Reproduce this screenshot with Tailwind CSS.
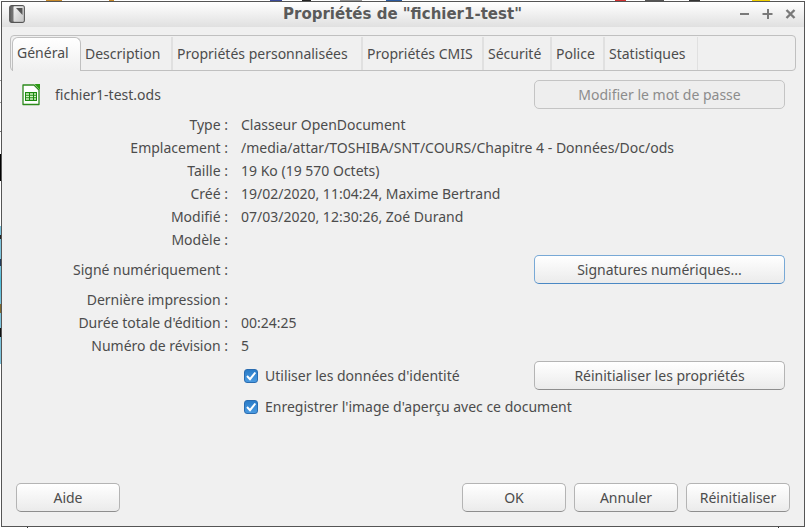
<!DOCTYPE html>
<html lang="fr">
<head>
<meta charset="utf-8">
<meta name="viewport" content="width=device-width, initial-scale=1">
<title>Propriétés de "fichier1-test"</title>
<script src="https://cdn.jsdelivr.net/npm/@tailwindcss/browser@4"></script>
</head>
<body class="min-h-screen flex flex-col font-['Noto_Sans','Open_Sans',sans-serif] text-sm text-[#4c4c4c] bg-white">
<!-- sliver of the window behind, above the dialog -->
<div class="h-px shrink-0 bg-[linear-gradient(to_right,#fff_46px,#c88a2a_46px,#c88a2a_62px,#fff_62px,#fff_109px,#c88a2a_109px,#c88a2a_114px,#fff_114px,#fff_270px,#3a4a9a_270px,#3a4a9a_282px,#fff_282px,#fff_302px,#222_302px,#222_311px,#fff_311px,#fff_340px,#999_340px,#999_362px,#fff_362px,#fff_386px,#2a5aa0_386px,#2a5aa0_402px,#fff_402px,#fff_615px,#d03030_615px,#d03030_626px,#fff_626px,#fff_645px,#555_645px,#555_664px,#fff_664px,#fff_689px,#333_689px,#333_700px,#fff_700px,#fff_752px,#f0d000_752px,#f0d000_770px,#fff_770px)]"></div>
<div class="grow flex">
<!-- sliver of the window behind, left of the dialog -->
<div class="w-px shrink-0 bg-[linear-gradient(to_bottom,#fff_79px,#999_79px,#999_80px,#fff_80px,#fff_101px,#999_101px,#999_102px,#fff_102px,#fff_130px,#777_130px,#777_131px,#fff_131px,#fff_153px,#000_153px,#000_180px,#fff_180px,#fff_225px,#7cc4dd_225px,#7cc4dd_234px,#222_234px,#222_238px,#7cc4dd_238px,#7cc4dd_258px,#223a5a_258px,#223a5a_265px,#7cc4dd_265px,#4cbfdc_280px,#7cc4dd_303px,#806a30_303px,#806a30_312px,#7cc4dd_312px,#7cc4dd_327px,#111_327px,#111_336px,#7cc4dd_336px,#7cc4dd_363px,#fff_363px)]"></div>
<div class="grow flex flex-col border border-[#555] bg-[#f0f0f0]">
  <header class="h-[25px] grid grid-cols-[1fr_auto_1fr] items-center pl-[7px] pr-2 pb-0.5 bg-linear-to-b from-white to-[#e0e0e0]">
    <svg class="w-4 h-[18px]" viewBox="0 0 16 18" aria-hidden="true">
      <defs>
        <linearGradient id="page" x1="0" y1="0" x2="1" y2="1"><stop offset="0" stop-color="#f4f4f4"/><stop offset="1" stop-color="#c4c4c4"/></linearGradient>
        <linearGradient id="spine" x1="0" y1="0" x2="1" y2="0"><stop offset="0" stop-color="#666"/><stop offset="1" stop-color="#a8a8a8"/></linearGradient>
      </defs>
      <rect x=".7" y=".7" width="14.600" height="16.600" rx="2" fill="url(#spine)" stroke="#555" stroke-width="1.2"/>
      <rect x="4.500" y="1.300" width="10.200" height="15.400" rx=".8" fill="url(#page)"/>
      <path d="M7 3h6.500v7z" fill="#555"/>
    </svg>
    <h1 class="font-['DejaVu_Sans',sans-serif] font-bold text-[15px] leading-5 text-[#5a5a5a]">Propriétés de "fichier1-test"</h1>
    <div class="flex justify-end gap-3 text-[#7a7a7a]">
      <button type="button" aria-label="Réduire"><svg class="size-[11px]" viewBox="0 0 11 11"><path d="M1 6h9" stroke="currentColor" stroke-width="2"/></svg></button>
      <button type="button" aria-label="Agrandir"><svg class="size-[11px]" viewBox="0 0 11 11"><path d="M.5 6h10M6 1v10" stroke="currentColor" stroke-width="2"/></svg></button>
      <button type="button" aria-label="Fermer"><svg class="size-[11px]" viewBox="0 0 11 11"><path d="M1.500 2l8 8M9.500 2l-8 8" stroke="currentColor" stroke-width="2.400"/></svg></button>
    </div>
  </header>

  <div role="tablist" class="mx-2 mt-2 h-9 flex border border-[#c0c0c0] rounded-sm pl-px pt-px whitespace-nowrap text-left">
    <button type="button" role="tab" aria-selected="true" class="w-[69px] -mb-px pl-1 pb-1 text-left border border-b-0 border-[#c0c0c0] rounded-t-md bg-linear-to-b from-white to-[#f0f0f0]">Général</button>
    <button type="button" role="tab" aria-selected="false" class="w-[92px] pl-1 text-left border-r-2 border-[#e0e0e0]">Description</button>
    <button type="button" role="tab" aria-selected="false" class="w-[190px] pl-1 text-left border-r-2 border-[#e0e0e0]">Propriétés personnalisées</button>
    <button type="button" role="tab" aria-selected="false" class="w-[121px] pl-1 text-left border-r-2 border-[#e0e0e0]">Propriétés CMIS</button>
    <button type="button" role="tab" aria-selected="false" class="w-[68px] pl-1 text-left border-r-2 border-[#e0e0e0]">Sécurité</button>
    <button type="button" role="tab" aria-selected="false" class="w-[53px] pl-1 text-left border-r-2 border-[#e0e0e0]">Police</button>
    <button type="button" role="tab" aria-selected="false" class="w-[93px] pl-1 text-left border-r border-[#e0e0e0]">Statistiques</button>
  </div>

  <main role="tabpanel" class="flex flex-col gap-1 pt-[9px] pr-[19px]">
    <div class="flex items-center pl-5">
      <svg class="w-[18px] h-[22px]" viewBox="0 0 18 22" aria-hidden="true">
        <path d="M1 1h11l5 5v14.500H1z" fill="#fff" stroke="#2c8a1c" stroke-width="1.300" stroke-linejoin="round"/>
        <path d="M12.500 0H18v6z" fill="#2c9a14"/>
        <rect x="3" y="8" width="12" height="9" fill="#1d8a10"/>
        <path d="M4 10h3M8 10h3M12 10h2M4 12.500h3M8 12.500h3M12 12.500h2M4 15h3M8 15h3M12 15h2" stroke="#d6f5c8" stroke-width="1.300"/>
      </svg>
      <span class="ml-[15px] grow">fichier1-test.ods</span>
      <button type="button" disabled class="w-[251px] h-[29px] rounded-[5px] border border-[#c4c4c4] bg-[#eee] text-[#8c8c8c]">Modifier le mot de passe</button>
    </div>

    <dl class="grid grid-cols-[226px_1fr] gap-x-[13px] leading-[23px]">
      <dt class="text-right">Type :</dt><dd>Classeur OpenDocument</dd>
      <dt class="text-right">Emplacement :</dt><dd>/media/attar/TOSHIBA/SNT/COURS/Chapitre 4 - Données/Doc/ods</dd>
      <dt class="text-right">Taille :</dt><dd>19 Ko (19 570 Octets)</dd>
      <dt class="text-right">Créé :</dt><dd>19/02/2020, 11:04:24, Maxime Bertrand</dd>
      <dt class="text-right">Modifié :</dt><dd>07/03/2020, 12:30:26, Zoé Durand</dd>
      <dt class="text-right">Modèle :</dt><dd></dd>
    </dl>

    <div class="flex items-center justify-between">
      <span class="w-[226px] text-right">Signé numériquement :</span>
      <button type="button" class="w-[251px] h-[29px] rounded-[5px] border border-[#78a9d6] border-b-[#4a88c4] bg-linear-to-b from-white to-[#ebebeb]">Signatures numériques...</button>
    </div>

    <dl class="grid grid-cols-[226px_1fr] gap-x-[13px] leading-[23px]">
      <dt class="text-right">Dernière impression :</dt><dd></dd>
      <dt class="text-right">Durée totale d'édition :</dt><dd>00:24:25</dd>
      <dt class="text-right">Numéro de révision :</dt><dd>5</dd>
    </dl>

    <div class="flex items-center justify-between pl-[242px]">
      <label class="flex items-center gap-[7px]">
        <span class="grid">
          <input type="checkbox" checked class="peer col-start-1 row-start-1 appearance-none size-[14px] rounded-[3px] border border-[#2a6cb0] bg-linear-to-b from-[#2a7cc8] to-[#4a9ae0]">
          <svg class="col-start-1 row-start-1 size-[14px] pointer-events-none hidden peer-checked:block" viewBox="0 0 14 14"><path d="M3 7l3 3.200L11.300 3.500" fill="none" stroke="#fff" stroke-width="2"/></svg>
        </span>
        Utiliser les données d'identité
      </label>
      <button type="button" class="w-[251px] h-[29px] rounded-[5px] border border-[#b4b4b4] border-b-[#8e8e8e] bg-linear-to-b from-white to-[#ebebeb]">Réinitialiser les propriétés</button>
    </div>
    <div class="flex items-center pl-[242px] h-[26px]">
      <label class="flex items-center gap-[7px]">
        <span class="grid">
          <input type="checkbox" checked class="peer col-start-1 row-start-1 appearance-none size-[14px] rounded-[3px] border border-[#2a6cb0] bg-linear-to-b from-[#2a7cc8] to-[#4a9ae0]">
          <svg class="col-start-1 row-start-1 size-[14px] pointer-events-none hidden peer-checked:block" viewBox="0 0 14 14"><path d="M3 7l3 3.200L11.300 3.500" fill="none" stroke="#fff" stroke-width="2"/></svg>
        </span>
        Enregistrer l'image d'aperçu avec ce document
      </label>
    </div>
  </main>

  <footer class="mt-auto flex gap-2 px-[14px] pb-[14px]">
    <button type="button" class="mr-auto w-[104px] h-[29px] rounded-[5px] border border-[#b4b4b4] border-b-[#8e8e8e] bg-linear-to-b from-white to-[#ebebeb]">Aide</button>
    <button type="button" class="w-[104px] h-[29px] rounded-[5px] border border-[#b4b4b4] border-b-[#8e8e8e] bg-linear-to-b from-white to-[#ebebeb]">OK</button>
    <button type="button" class="w-[104px] h-[29px] rounded-[5px] border border-[#b4b4b4] border-b-[#8e8e8e] bg-linear-to-b from-white to-[#ebebeb]">Annuler</button>
    <button type="button" class="w-[104px] h-[29px] rounded-[5px] border border-[#b4b4b4] border-b-[#8e8e8e] bg-linear-to-b from-white to-[#ebebeb]">Réinitialiser</button>
  </footer>
</div>
</div>
<div class="h-px shrink-0 bg-[linear-gradient(to_right,#fff_27px,#333_27px,#333_28px,#fff_28px,#fff_778px,#333_778px,#333_779px,#fff_779px)]"></div>
</body>
</html>
